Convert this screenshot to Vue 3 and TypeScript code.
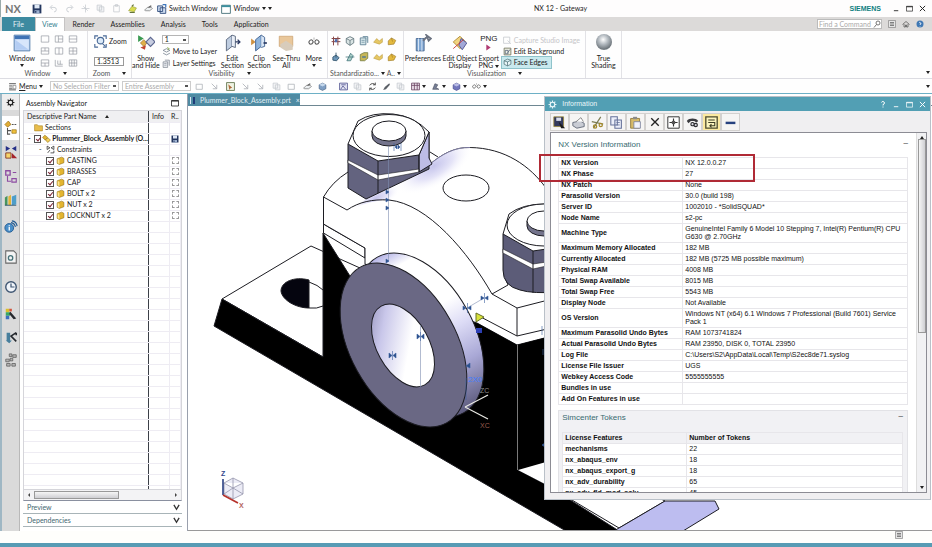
<script setup lang="ts">
import { h, ref, type FunctionalComponent } from 'vue'

type Shape = { d: string; s?: string; f?: string; w?: number }

const NAVY = '#2f4a7a'
const GREY = '#8a8f98'
const PALE = '#c4c8ce'
const GOLD = '#e0ad35'

// Every glyph is drawn on a 16 x 16 grid.
const glyphs: Record<string, Shape[]> = {
  save: [{ d: 'M1 1h14v14H1z', f: '#24365f' }, { d: 'M4 1h8v6H4z', f: '#dfe8f5' }, { d: 'M4 10h8v5H4z', f: '#9db1d0' }, { d: 'M6 11v3', s: '#24365f', w: 2 }],
  undo: [{ d: 'M3 6h6a4 4 0 0 1 0 8M6 2L2 6l4 4', s: PALE, w: 1.5 }],
  redo: [{ d: 'M13 6H7a4 4 0 0 0 0 8M10 2l4 4-4 4', s: PALE, w: 1.5 }],
  cutPale: [{ d: 'M8 1v14M1 8h14M4 4l8 8', s: PALE, w: 1.3 }],
  copyPale: [{ d: 'M2 2h8v9H2zM6 5h8v9H6z', s: PALE, w: 1.3, f: '#f3f4f6' }],
  pastePale: [{ d: 'M3 3h10v11H3zM6 1h4v3H6z', s: PALE, w: 1.3 }],
  brush: [{ d: 'M1 12l6-8 8 3-4 7z', f: '#d8dc4e', s: '#91983a' }, { d: 'M7 4l3-3M3 15h9', s: '#64743c', w: 2 }],
  touch: [{ d: 'M1 11l5-5h7l2 2-5 4H3z', s: '#555', f: '#eceff1' }, { d: 'M8 6l5-3', s: '#555', w: 2 }],
  switchWin: [{ d: 'M1 3h8v9H1zM5 6h9v9H5z', s: NAVY, f: '#cddcf0', w: 1.4 }, { d: 'M9 1h5v4', s: '#3f77bd', w: 2 }],
  window: [{ d: 'M1 2h14v13H1z', s: '#3f6c75', f: '#fff', w: 1.4 }, { d: 'M1 2h14v3H1z', f: '#3b8f9e' }],
  bigWindow: [{ d: 'M1 1h14v14H1z', s: '#557daa', f: '#b9d1f2', w: 0.8 }, { d: 'M1.5 1.5h13v3h-13z', f: '#3f73b5' }, { d: 'M2 5h12v9H2z', f: '#d8e6fb' }, { d: 'M2 5l12 9H2z', f: '#b4cdf3' }],
  gA: [{ d: 'M2 3h12v10H2z', s: GREY }],
  gB: [{ d: 'M2 3h12v10H2zM7 3v10M7 8h7', s: GREY }],
  gC: [{ d: 'M2 3h12v10H2zM2 8h12', s: GREY }],
  gD: [{ d: 'M2 3h12v10H2zM2 8h12M8 3v5', s: GREY }],
  gE: [{ d: 'M2 3h12v10H2zM8 3v10', s: GREY }],
  gF: [{ d: 'M2 3h12v10H2zM8 3v10M2 8h12', s: GREY }],
  gG: [{ d: 'M2 3h12v10H2zM2 8h12M8 8v5', s: GREY }],
  gH: [{ d: 'M2 3v10h12M6 4v6h8M10 4v6', s: GREY }],
  gI: [{ d: 'M2 3h12v10H2zM6 3v10M10 3v10M2 8h12', s: GREY }],
  zoomFit: [{ d: 'M1 5V1h4M11 1h4v4M1 11v4h4M15 11v4h-4', s: '#4a6a97', w: 1.4 }, { d: 'M12 7a4 4 0 1 1-8 0 4 4 0 0 1 8 0M10.500 10.500L14 14', s: '#4a6a97', f: '#dceaf8', w: 1.4 }],
  showHide: [{ d: 'M1 1l5 3-5 3z', f: '#3b9a52' }, { d: 'M3 8l3-3 3 3-3 3z', f: '#e0b04a', s: '#8a6323', w: 0.5 }, { d: 'M3 12l5-2-1 4z', f: '#c2452f' }, { d: 'M8 7l4-4 4 4-4 4z', f: '#c7cde0', s: '#5c6790', w: 1 }],
  moveLayer: [{ d: 'M2 6l6-3 6 3-6 3zM2 11l6 3 6-3', s: '#6b7787', w: 1.3 }, { d: 'M9 1l4 2-3 2', s: '#7da33c', w: 1.4 }],
  layers: [{ d: 'M2 5h8v10H2zM5 2h8v10', s: '#777f8b', f: '#e8ebef', w: 1.2 }, { d: 'M4 8h4M4 11h4', s: '#777f8b' }],
  section: [{ d: 'M3 5l5-4v10l-5 4z', f: '#bfcde0', s: '#56637a', w: 0.8 }, { d: 'M8 1l3 1v10l-3-1', f: '#e9eef6', s: '#56637a', w: 0.8 }, { d: 'M11 7h4M13 5l2 2-2 2', s: '#2d3c64', w: 1.2 }],
  clip: [{ d: 'M1 4l4 3-4 3z', f: '#ce9142' }, { d: 'M5 5l5-4v10l-5 4z', f: '#8fb4dc', s: '#3c5f8e', w: 0.8 }, { d: 'M10 1l3 2v8l-3 1', f: '#d8e5f5', s: '#3c5f8e', w: 0.8 }, { d: 'M12 8h3', s: '#2d3c64', w: 1.5 }],
  seeThru: [{ d: 'M2 2h12v9H2z', f: '#e9c79a', s: '#c69b68', w: 0.6 }, { d: 'M3 9l5-3 6 4v4l-6 1-5-3z', f: '#d8ccbb' }],
  more: [{ d: 'M1 8c2-4 5-4 6 0-2 4-5 4-6 0M9 8c1-4 4-4 6 0-2 4-5 4-6 0', s: '#555', w: 1.4 }, { d: 'M8 2v3', s: '#999', w: 1 }],
  stdA: [{ d: 'M1 4h14M1 9h14M4 1v14M11 1v14', s: '#884a4a', w: 1.6 }, { d: 'M6 5h4v5H6z', f: '#4f6dae' }],
  stdB: [{ d: 'M2 4l6-3 6 3v7l-6 4-6-4zM2 4l6 3 6-3M8 7v8', s: '#60747a', f: '#d9e4e4', w: 1.3 }],
  stdC: [{ d: 'M2 3h9v11H2zM6 1h8v10', s: '#5e7f92', f: '#d4e6ea', w: 1.4 }, { d: 'M4 7h5M4 10h5', s: '#5e7f92' }],
  stdD: [{ d: 'M1 10l5-6 4 4 5-4v6l-5 3z', f: '#e6c763', s: '#b29337', w: 0.8 }],
  stdE: [{ d: 'M2 8l5-5 7 4-3 6-9 1z', f: '#e3b93e', s: '#9b7826', w: 1 }, { d: 'M7 3l2 6', s: '#9b7826' }],
  stdF: [{ d: 'M8 1v8M3 8l5-3 5 4-4 5-6-1z', s: '#34566e', f: '#6e98bb', w: 1.4 }],
  stdG: [{ d: 'M3 14L9 2l4 4-4 8zM1 8h14', s: '#3e7077', f: '#aacfc9', w: 1.2 }],
  stdH: [{ d: 'M2 14V4l6-3h6v9l-5 4z', f: '#c6b658', s: '#6d753b', w: 1.2 }, { d: 'M5 8h6', s: '#3d6fa1', w: 2 }],
  prefs: [{ d: 'M2 4h7v11H2z', f: '#7fa7d3', s: '#476892', w: 0.8 }, { d: 'M4 4v11M7 4v11', s: '#dfeaf6', w: 0.8 }, { d: 'M8 6l4-4M11 1l4 3-2 2z', s: '#6b7280', w: 1.6 }],
  editObj: [{ d: 'M2 7l6-5 5 5-5 6z', f: '#f1d47f', s: '#b08b34', w: 0.8 }, { d: 'M9 4l5 4-4 6-3-4z', f: '#a2a8d8', s: '#4c5291', w: 0.8 }, { d: 'M2 13L11 5', s: '#c33', w: 0.8 }],
  play: [{ d: 'M3 1l10 7-10 7z', f: '#b03a72' }],
  camera: [{ d: 'M1 2h11v11H1zM8 8l6 6', s: '#c5c9cf', w: 1.4 }],
  editBg: [{ d: 'M2 2h12v12H2z', s: '#6c6f57', f: '#eef0e2', w: 1.4 }, { d: 'M4 6h5v6H4zM8 10l5-6', s: '#54627c', w: 1.4 }],
  face: [{ d: 'M2 5l6-3 6 2v7l-6 3-6-3zM2 5l6 2 6-3M8 7v7', s: '#41646b', f: '#e8f6f8', w: 1.2 }],
  menu: [{ d: 'M2 3h12M2 7h6M2 11h6M2 14h12', s: '#4b4b4b', w: 1.6 }, { d: 'M9 6h5v6H9z', s: '#777', w: 1.2 }],
  arrowPale: [{ d: 'M3 3l9 9M12 5v7H5', s: '#aeb2b8', w: 1.5 }],
  boxPale: [{ d: 'M2 4h11v9H2z', s: '#aeb2b8', w: 1.4 }],
  pick: [{ d: 'M1 1h14v14H1z', s: '#54683f', f: '#eff3e3', w: 1.4 }, { d: 'M4 4l7 6-3 1-2 3z', f: '#b0683b' }],
  cubeBlue: [{ d: 'M2 5l6-3 6 3v7l-6 3-6-3z', f: '#7f9fc4', s: '#3f597b', w: 1 }, { d: 'M2 5l6 3 6-3-6-3z', f: '#c5d8ec' }],
  cubeViolet: [{ d: 'M2 5l6-3 6 3v7l-6 3-6-3z', f: '#7277bd', s: '#3b3f83', w: 1 }, { d: 'M2 5l6 3 6-3-6-3z', f: '#b9bce6' }],
  fit: [{ d: 'M1 2h14v12H1z', s: '#4c4f8c', f: '#e5e6f4', w: 1.4 }, { d: 'M3 13l4-6 5 6M4 5h8', s: '#4c4f8c', w: 1.4 }],
  rotate: [{ d: 'M13 5a6 6 0 0 0-10 1M3 11a6 6 0 0 0 10-1M13 1v4H9M3 15v-4h4', s: '#444', w: 1.6 }],
  pen: [{ d: 'M2 14l3-5 8-7 1 3-7 8z', f: '#5a5f66' }],
  grid: [{ d: 'M1 2h14v12H1zM1 6h14M6 2v12M11 2v12', s: '#69425f', f: '#eadfe9', w: 1.4 }],
  shape: [{ d: 'M3 13L7 3l5 2-3 5 5 3z', f: '#777f96', s: '#3c4254', w: 1 }],
  gear: [{ d: 'M8 1v3M8 12v3M1 8h3M12 8h3M3 3l2 2M11 11l2 2M13 3l-2 2M5 11l-2 2', s: 'currentColor', w: 2 }, { d: 'M12 8a4 4 0 1 1-8 0 4 4 0 0 1 8 0z', s: 'currentColor', w: 2 }],
  navAsm: [{ d: 'M1 4l4-4 3 4-4 3z', f: GOLD, s: '#9c7320', w: 0.8 }, { d: 'M4 8v7h3M4 11h4M9 4h2M12 4h2', s: '#555', w: 1.2 }, { d: 'M9 10h5v4H9z', f: '#f2c23c', s: '#97721c', w: 0.8 }],
  navCon: [{ d: 'M2 1v6l5-3zM14 1v6L9 4z', f: '#252f86' }, { d: 'M2 9h6v6H2z', f: '#f5d46b', s: '#803323', w: 1 }, { d: 'M9 9l6 6H9z', f: '#a5222b' }],
  navPart: [{ d: 'M2 2h5v5H2z', s: '#8d4ca2', w: 1.5 }, { d: 'M4 8v6h4M10 4h4M9 11h5v4H9z', s: '#8d4ca2', w: 1.3 }],
  library: [{ d: 'M1 5l3-2v11H1z', f: '#48945d' }, { d: 'M5 4l3-2v12H5z', f: '#e3b436' }, { d: 'M9 4l5-2v11l-5 1z', f: '#4e9ec9' }, { d: 'M1 14h13', s: '#2f5470' }],
  web: [{ d: 'M11 9a5 5 0 1 1-10 0 5 5 0 0 1 10 0z', f: '#4a8fc9', s: '#215a91', w: 1 }, { d: 'M6 6v1M6 8v4', s: '#fff', w: 1.5 }, { d: 'M8 3a6 6 0 0 1 5 5M9 1a7 7 0 0 1 6 6', s: '#215a91', w: 1.2 }],
  doc: [{ d: 'M2 1h9l3 3v11H2z', s: '#666', f: '#f4f4f4', w: 1.2 }, { d: 'M10 9a2.500 2.500 0 1 1-5 0 2.500 2.500 0 0 1 5 0z', s: '#48747a', w: 1.5 }],
  clock: [{ d: 'M14 8A6 6 0 1 1 2 8a6 6 0 0 1 12 0z', s: '#3f5672', f: '#f1f5fa', w: 1.6 }, { d: 'M8 4v4h4', s: '#3f5672', w: 1.4 }],
  palette: [{ d: 'M2 2h4v4H2z', f: '#d9bf2d' }, { d: 'M2 6h5v4H2z', f: '#3ba864' }, { d: 'M2 10h4v4H2z', f: '#3b6fc0' }, { d: 'M7 5l7 8-3 1-5-6z', f: '#26292e' }, { d: 'M6 2h3v3H6z', f: '#d2553e' }],
  roles: [{ d: 'M3 3h4v9H3zM2 12l4 3 3-3z', f: '#477f9d' }, { d: 'M14 3L8 7l6 6M14 3v3', s: '#26292e', w: 1.8 }],
  nodes: [{ d: 'M6 1h3v3H6zM10 2h4v3h-4zM2 7h4v3H2zM7 6h3v3H7zM3 12h4v3H3zM9 12h4v3H9z', f: '#b5b5b5', s: '#555', w: 0.8 }],
  folder: [{ d: 'M1 3h5l2 2h7v9H1z', f: '#e8bd4c', s: '#a67c1e', w: 1 }],
  part: [{ d: 'M2 5l8-3 4 2v8l-8 3-4-2z', f: '#e3b52f', s: '#8c6a12', w: 1 }, { d: 'M3 5l3 2v7l-3-1z', f: '#fbe694' }],
  asm: [{ d: 'M1 6l4-4 5 4-4 5z', f: '#e3b52f', s: '#8c6a12', w: 1 }, { d: 'M6 10l5-3 4 4-5 4z', f: '#f2d05c', s: '#8c6a12', w: 1 }],
  con: [{ d: 'M2 2v6l5-3zM14 2v6L9 5zM3 14l4-5M8 14h6v-4', s: '#333', w: 1.4 }],
  search: [{ d: 'M14 6a4 4 0 1 1-8 0 4 4 0 0 1 8 0zM7 9l-5 6', s: '#666', w: 1.8 }],
  list: [{ d: 'M1 1h14v14H1z', s: '#777', f: '#e5e5e5', w: 1.2 }, { d: 'M4 5h8M4 8h8M4 11h8', s: '#555', w: 1.4 }],
  home: [{ d: 'M1 9l7-6 7 6M4 8v6h3v-4h2v4h3V8', s: '#555', w: 1.5 }],
  help: [{ d: 'M15 8A7 7 0 1 1 1 8a7 7 0 0 1 14 0z', f: '#3f78b4' }, { d: 'M6 6a2 2 0 1 1 2 3v1M8 12v1', s: '#fff', w: 1.6 }],
  min: [{ d: 'M2 13h10', s: 'currentColor', w: 2 }],
  max: [{ d: 'M1 3h14v11H1z', s: 'currentColor', w: 1.6 }, { d: 'M1 4h14', s: 'currentColor', w: 2 }],
  close: [{ d: 'M2 2l12 12M14 2L2 14', s: 'currentColor', w: 2.2 }],
  pin: [{ d: 'M5 5a3 3 0 1 1 3 4v2M8 13v2', s: 'currentColor', w: 2 }],
  dSave: [{ d: 'M1 1h12v12H1z', f: '#32395c', s: '#9c8a3a', w: 1 }, { d: 'M4 2h6v4H4z', f: '#d8ddeb' }, { d: 'M7 7l8 8h-5z', f: '#1c1c1c' }],
  dPrint: [{ d: 'M1 8l9-2 5 3v4l-9 2-5-3z', f: '#c9ccd4', s: '#555c6c', w: 1 }, { d: 'M5 7l6-5 3 5', f: '#fff', s: '#777', w: 1 }],
  dCut: [{ d: 'M3 15L12 1M1 7l14 3', s: '#7d7d54', w: 1.5 }, { d: 'M3 13a2 2 0 1 0 4 0 2 2 0 0 0-4 0zM10 11a2 2 0 1 0 4 0 2 2 0 0 0-4 0z', s: '#a3892b', w: 1.5 }],
  dCopy: [{ d: 'M1 1h8v10H1zM6 5h8v10H6z', s: '#66729a', f: '#eceffa', w: 1.3 }, { d: 'M8 8h4M8 11h4', s: '#66729a' }],
  dPaste: [{ d: 'M2 3h11v12H2z', f: '#d7bc69', s: '#8a7230', w: 1 }, { d: 'M5 1h5v3H5z', f: '#8a8a8a' }, { d: 'M6 7h8v8H6z', f: '#f1f3fa', s: '#777f9b', w: 1 }],
  dTarget: [{ d: 'M1 1h14v14H1z', s: '#333', f: '#fff', w: 1.2 }, { d: 'M8 3v10M3 8h10', s: '#333', w: 1.4 }, { d: 'M6 6h4v4H6z', f: '#555' }],
  dFind: [{ d: 'M1 6c3-4 11-4 14 0l-2 2-3-2H6L3 9z', f: '#3b3b3f' }, { d: 'M6 10a2 2 0 1 0 4 0 2 2 0 0 0-4 0zM10 11a2 2 0 1 0 4 0 2 2 0 0 0-4 0z', f: '#d9d9df', s: '#2c2c30', w: 1.4 }],
  dWrap: [{ d: 'M1 1h14v14H1z', s: '#4b4a2d', f: '#fbf4bd', w: 1.6 }, { d: 'M4 5h8M4 8h8v4H6M8 10l-2 2 2 2', s: '#3d3c25', w: 1.3 }],
  dDash: [{ d: 'M2 7h12v3H2z', f: '#27427f' }],
}

const Icon: FunctionalComponent<{ name: string; size?: number }> = (props) =>
  h(
    'svg',
    { viewBox: '0 0 16 16', width: props.size ?? 10, height: props.size ?? 10, 'aria-hidden': 'true' },
    (glyphs[props.name] ?? []).map((g) =>
      h('path', { d: g.d, fill: g.f ?? 'none', stroke: g.s ?? 'none', 'stroke-width': g.w ?? 1 }),
    ),
  )
Icon.props = ['name', 'size']

const quick = ['undo', 'redo', 'cutPale', 'copyPale', 'pastePale', 'brush', 'touch']
const tabs = ['Render', 'Assemblies', 'Analysis', 'Tools', 'Application']
const layouts = ['gA', 'gB', 'gC', 'gD', 'gE', 'gF', 'gG', 'gH', 'gI']
const standards = ['stdA', 'stdB', 'stdC', 'stdD', 'stdE', 'stdF', 'stdG', 'stdH', 'stdD', 'stdE']
const selection = ['boxPale', 'arrowPale', 'pick', 'arrowPale', 'arrowPale', 'copyPale', 'boxPale', 'touch', 'cubeBlue']
const viewTools = ['fit', 'copyPale', 'rotate', 'pen', 'copyPale', 'grid', 'shape', 'cubeViolet', 'more']
const rail = ['gear', 'navAsm', 'navCon', 'navPart', 'library', 'web', 'doc', 'clock', 'palette', 'roles', 'nodes']
const parts = ref(['CASTING', 'BRASSES', 'CAP', 'BOLT x 2', 'NUT x 2', 'LOCKNUT x 2'].map((name) => ({ name, on: true })))
const rootOn = ref(true)
const zoom = ref('1.3513')
const blankRows = 25

const dialogTools = [
  ['dSave', 'Save'], ['dPrint', 'Print'], ['dCut', 'Cut'], ['dCopy', 'Copy'], ['dPaste', 'Paste'],
  ['close', 'Delete'], ['dTarget', 'Locate'], ['dFind', 'Find'], ['dWrap', 'Word wrap'], ['dDash', 'Collapse'],
]

const info: [string, string][] = [
  ['NX Version', 'NX 12.0.0.27'],
  ['NX Phase', '27'],
  ['NX Patch', 'None'],
  ['Parasolid Version', '30.0 (build 198)'],
  ['Server ID', '1002010 - *SolidSQUAD*'],
  ['Node Name', 's2-pc'],
  ['Machine Type', 'GenuineIntel Family 6 Model 10 Stepping 7, Intel(R) Pentium(R) CPU G630 @ 2.70GHz'],
  ['Maximum Memory Allocated', '182 MB'],
  ['Currently Allocated', '182 MB (5725 MB possible maximum)'],
  ['Physical RAM', '4008 MB'],
  ['Total Swap Available', '8015 MB'],
  ['Total Swap Free', '5543 MB'],
  ['Display Node', 'Not Available'],
  ['OS Version', 'Windows NT (x64) 6.1 Windows 7 Professional (Build 7601) Service Pack 1'],
  ['Maximum Parasolid Undo Bytes', 'RAM 1073741824'],
  ['Actual Parasolid Undo Bytes', 'RAM 23950, DISK 0, TOTAL 23950'],
  ['Log File', 'C:\\Users\\S2\\AppData\\Local\\Temp\\S2ec8de71.syslog'],
  ['License File Issuer', 'UGS'],
  ['Webkey Access Code', '5555555555'],
  ['Bundles in use', ''],
  ['Add On Features in use', ''],
]

const tokens: [string, string][] = [
  ['mechanisms', '22'],
  ['nx_abaqus_env', '18'],
  ['nx_abaqus_export_g', '18'],
  ['nx_adv_durability', '65'],
  ['nx_adv_fld_mod_solv', '45'],
]
</script>

<template>
  <div class="app">
    <header class="titlebar">
      <span class="nx">NX</span>
      <div class="quick">
        <button class="bare" aria-label="Save"><Icon name="save" /></button>
        <button v-for="q in quick" :key="q" class="bare" :aria-label="q"><Icon :name="q" :size="9" /></button>
      </div>
      <button class="bare"><Icon name="switchWin" />Switch Window</button>
      <button class="bare"><Icon name="window" />Window <i class="tri"></i><i class="tri"></i></button>
      <span class="caption">NX 12 - Gateway</span>
      <span class="siemens">SIEMENS</span>
      <div class="winctl">
        <button class="bare" aria-label="Minimize"><Icon name="min" :size="7" /></button>
        <button class="bare" aria-label="Maximize"><Icon name="max" :size="7" /></button>
        <button class="bare" aria-label="Close"><Icon name="close" :size="7" /></button>
      </div>
    </header>

    <nav class="tabs">
      <a href="#" class="tab file">File</a>
      <a href="#" class="tab active">View</a>
      <a v-for="t in tabs" :key="t" href="#" class="tab">{{ t }}</a>
      <div class="find">
        <input type="text" placeholder="Find a Command" aria-label="Find a Command" />
        <Icon name="search" :size="8" />
      </div>
      <button class="bare end" aria-label="List"><Icon name="list" :size="8" /></button>
      <button class="bare end" aria-label="Home"><Icon name="home" :size="8" /></button>
      <button class="bare end" aria-label="Help"><Icon name="help" :size="8" /></button>
    </nav>

    <section class="ribbon">
      <div class="group g-window">
        <div class="tools">
          <button class="big wide"><Icon name="bigWindow" :size="18" />Window<i class="tri"></i></button>
          <div class="layouts">
            <button v-for="l in layouts" :key="l" class="bare" :aria-label="l"><Icon :name="l" :size="10" /></button>
          </div>
        </div>
        <footer>Window<i class="tri"></i></footer>
      </div>
      <div class="group g-zoom">
        <div class="tools stack">
          <button class="bare"><Icon name="zoomFit" :size="13" />Zoom</button>
          <input v-model="zoom" class="num" aria-label="Zoom scale" />
        </div>
        <footer>Zoom<i class="tri"></i></footer>
      </div>
      <div class="group g-vis">
        <div class="tools">
          <button class="big"><Icon name="showHide" :size="18" />Show<br />and Hide</button>
          <div class="stack layer">
            <select aria-label="Work layer"><option>1</option></select>
            <button class="bare"><Icon name="moveLayer" :size="9" />Move to Layer</button>
            <button class="bare"><Icon name="layers" :size="9" />Layer Settings</button>
          </div>
          <button class="big"><Icon name="section" :size="18" />Edit<br />Section</button>
          <button class="big"><Icon name="clip" :size="18" />Clip<br />Section</button>
          <button class="big"><Icon name="seeThru" :size="18" />See-Thru<br />All</button>
          <button class="big more"><Icon name="more" :size="12" />More<i class="tri"></i></button>
        </div>
        <footer>Visibility<i class="tri"></i></footer>
      </div>
      <div class="group g-std">
        <div class="tools">
          <div class="standards">
            <button v-for="(s, i) in standards" :key="i" class="bare" :aria-label="'Standard part ' + (i + 1)"><Icon :name="s" :size="10" /></button>
          </div>
        </div>
        <footer><span>Standardizatio...</span><i class="tri"></i><span>A..</span><i class="tri"></i></footer>
      </div>
      <div class="group g-viz">
        <div class="tools">
          <button class="big"><Icon name="prefs" :size="18" />Preferences</button>
          <button class="big"><Icon name="editObj" :size="18" />Edit Object<br />Display</button>
          <button class="big png"><b>PNG</b><Icon name="play" :size="7" />Export<br />PNG <i class="tri"></i></button>
          <div class="stack viz">
            <button class="bare" disabled><Icon name="camera" :size="9" />Capture Studio Image</button>
            <button class="bare"><Icon name="editBg" :size="9" />Edit Background</button>
            <button class="bare on"><Icon name="face" :size="9" />Face Edges</button>
          </div>
        </div>
        <footer>Visualization<i class="tri"></i></footer>
      </div>
      <div class="group g-shade">
        <div class="tools">
          <button class="big"><span class="ball"></span>True<br />Shading</button>
        </div>
      </div>
      <i class="tri corner"></i>
    </section>

    <div class="toolbar">
      <button class="bare"><Icon name="menu" :size="9" /><span><u>M</u>enu</span><i class="tri"></i></button>
      <select aria-label="Selection filter"><option>No Selection Filter</option></select>
      <select aria-label="Selection scope"><option>Entire Assembly</option></select>
      <div class="strip">
        <button v-for="(s, i) in selection" :key="i" class="bare" :aria-label="'Selection tool ' + (i + 1)"><Icon :name="s" :size="9" /></button>
      </div>
      <div class="strip view">
        <button v-for="(s, i) in viewTools" :key="i" class="bare" :aria-label="'View tool ' + (i + 1)"><Icon :name="s" :size="9" /><i v-if="i > 4" class="tri"></i></button>
      </div>
      <i class="tri corner"></i>
    </div>

    <main class="work">
      <aside class="rail">
        <button v-for="(r, i) in rail" :key="r" class="bare" :class="{ current: i === 1, first: i === 0 }" :aria-label="r"><Icon :name="r" :size="i ? 14 : 9" /></button>
      </aside>

      <section class="navigator">
        <div class="nav-title">Assembly Navigator<button class="bare" aria-label="Maximize panel"><Icon name="max" :size="8" /></button></div>
        <div class="tree">
          <table>
            <thead>
              <tr><th>Descriptive Part Name<i class="up"></i></th><th>Info</th><th>R..</th></tr>
            </thead>
            <tbody>
              <tr><td><div class="cell l1"><Icon name="folder" :size="9" />Sections</div></td><td></td><td></td></tr>
              <tr>
                <td>
                  <label class="cell l0 root"><span>-</span><input v-model="rootOn" type="checkbox" /><Icon name="asm" :size="9" />Plummer_Block_Assembly (O...</label>
                </td>
                <td></td>
                <td><Icon name="save" :size="8" /></td>
              </tr>
              <tr><td><div class="cell l2"><span>-</span><Icon name="con" :size="9" />Constraints</div></td><td></td><td></td></tr>
              <tr v-for="p in parts" :key="p.name">
                <td><label class="cell l3"><input v-model="p.on" type="checkbox" /><Icon name="part" :size="9" />{{ p.name }}</label></td>
                <td></td>
                <td><span class="ghost"></span></td>
              </tr>
              <tr v-for="n in blankRows" :key="n"><td></td><td></td><td></td></tr>
            </tbody>
          </table>
        </div>
        <div class="hscroll"><i class="lt"></i><span class="thumb"></span><i class="rt"></i></div>
        <button class="fold">Preview<svg viewBox="0 0 8 8" width="7" height="7"><path d="M1 1l3 5 3-5" /></svg></button>
        <button class="fold">Dependencies<svg viewBox="0 0 8 8" width="7" height="7"><path d="M1 1l3 5 3-5" /></svg></button>
      </section>

      <section class="graphics">
        <div class="doc-tabs"><a href="#" class="doc-tab"><span class="dt"></span>Plummer_Block_Assembly.prt<em>×</em></a></div>
        <svg class="model" viewBox="188 106 744 424" preserveAspectRatio="xMinYMin slice" role="img" aria-label="Plummer block assembly">
          <defs>
            <linearGradient id="bore" x1="0" y1="0" x2="0.700" y2="1">
              <stop offset="0" stop-color="#8583ad" />
              <stop offset="0.300" stop-color="#c9c7ea" />
              <stop offset="0.650" stop-color="#ffffff" />
            </linearGradient>
            <linearGradient id="rim" x1="0.500" y1="0" x2="0.500" y2="1">
              <stop offset="0" stop-color="#b4b3e6" />
              <stop offset="0.100" stop-color="#ffffff" />
              <stop offset="0.400" stop-color="#ffffff" />
              <stop offset="0.550" stop-color="#dddcf6" />
              <stop offset="0.750" stop-color="#a9a8d6" />
              <stop offset="1" stop-color="#5c5a7c" />
            </linearGradient>
            <radialGradient id="domeShade">
              <stop offset="0" stop-color="#c6c5ec" />
              <stop offset="0.500" stop-color="#e6e5f8" />
              <stop offset="1" stop-color="#ffffff" stop-opacity="0" />
            </radialGradient>
            <clipPath id="capClip">
              <path d="M340 218Q362 200 389 200C400 201 410 204 420 210L500 210V147H470C455 147 442 154 429 165L370 196Z" />
            </clipPath>
          </defs>

          <g stroke="#1c1c22" stroke-width="1" stroke-linejoin="round">
            <path d="M222 299L311 246L360 268V378L323 357Z" fill="#fff" />
            <path d="M222 299L214 326L566 531H619L545 484V300H365L323 233V357Z" fill="#000" />
            <path d="M309 280C294 276 281 282 281 291C282 300 296 308 309 308Z" fill="#05050f" />
            <path d="M309 282Q318 285 323 290M309 308Q317 309 323 306" fill="none" />
            <path d="M518 470L573 455L665 501L619 528L545 484Z" fill="#fff" />
            <path d="M619 528L665 501H715L719 509L683 531H614Z" fill="#bdbdf0" />
            <path d="M323.500 224V233L365 258V248L330 228Z" fill="#fff" />
            <path d="M348 172Q332 182 323.500 197V224L365 248V264L440 310L477 323L517 345L560 334V200L546 188C530 166 505 148 470 147.500C455 147 442 154 429 165Z" fill="#fff" />
            <g clip-path="url(#capClip)" stroke="none">
              <ellipse cx="434" cy="166" rx="44" ry="20" transform="rotate(-32 434 166)" fill="url(#domeShade)" />
              <ellipse cx="376" cy="198" rx="26" ry="10" transform="rotate(-24 376 198)" fill="url(#domeShade)" />
            </g>
            <path d="M323.500 197L347 210C359 202 372 199 389 200C428 204 468 252 492 294" fill="none" />
            <path d="M429 165C442 154 455 147 470 147.500" fill="none" stroke="#7b7aa0" />
            <path d="M492 294L517 308L560 297M492 294L508 285Q503 275 504 250M517 308V336M477 315L517 336L560 326M430 152L438 157" fill="none" />
            <ellipse cx="466" cy="188" rx="23" ry="13" fill="#fff" />
          </g>

          <path d="M477 323L517 345L560 334V480L518 470L470 470V400Z" fill="#000" />
          <path d="M518 470L560 458V492L545 484Z" fill="#fff" />
          <path d="M517.500 345V470" stroke="#7a7a7a" stroke-width="1" />

          <g stroke="#1c1c22" stroke-width="1">
            <path d="M348 144V188L366 199L429 169V132Z" fill="#63637f" />
            <path d="M419 155L429 132V158L432 164L419 172Z" fill="#bdbce6" />
            <path d="M348 144L358 121Q372 112 393 114Q414 116 429 132L419 155L378 161Z" fill="#fff" />
            <path d="M348 160L378 175L419 169V172L378 180L348 163Z" fill="#fff" stroke-width="0.600" />
            <path d="M378 161V193M419 155V172" fill="none" />
            <ellipse cx="389" cy="135.500" rx="36" ry="21" fill="#fff" />
            <path d="M372 131V136A17 10 0 0 0 406 136V131Z" fill="#74748c" />
            <ellipse cx="389" cy="131" rx="17" ry="10" fill="#fff" />
          </g>

          <g stroke="#1c1c22" stroke-width="1">
            <path d="M503 234V270Q503 286 520 290Q533 294 560 292V234Z" fill="#5c5c78" />
            <path d="M503 234L509 214Q522 204 545 204H560V247L533 251Z" fill="#fff" />
            <path d="M503 249L533 264L560 260V263L533 269L503 253Z" fill="#fff" stroke-width="0.600" />
            <path d="M533 251V293" fill="none" />
            <ellipse cx="544" cy="225" rx="37" ry="21" fill="#fff" />
            <path d="M527 221V226A17 10 0 0 0 561 226V221Z" fill="#74748c" />
            <ellipse cx="544" cy="221" rx="17" ry="10" fill="#fff" />
          </g>

          <g stroke="#1c1c22" stroke-width="1">
            <ellipse cx="420.500" cy="335" rx="53" ry="89" transform="rotate(-29 420.500 335)" fill="url(#rim)" />
            <ellipse cx="403.500" cy="345" rx="53" ry="89" transform="rotate(-29 403.500 345)" fill="#6a6884" />
            <ellipse cx="403" cy="345.500" rx="26" ry="45" transform="rotate(-29 403 345.500)" fill="url(#bore)" />
          </g>

          <g stroke="#3a5fa0" stroke-width="0.600" fill="#2a4f8a">
            <path d="M388.500 146V262M420.500 325V387M467 308L484 298" fill="none" stroke="#7e8db0" />
            <path d="M394 143v8M401 143v8M395 147l2-2v4zM400 147l-2-2v4z" />
            <path d="M386 190l3 2-3 2zM386 198l3 2-3 2zM386 206l3 2-3 2zM386 259l3 2-3 2z" />
            <path d="M392.500 351v9M389 353v5l3-2.500zM396 353v5l-3-2.500zM420.500 332v9M417 334v5l3-2.500zM424 334v5l-3-2.500z" />
            <path d="M484.500 293v10M481 296v4l3-2zM488 296v4l-3-2zM467.500 303v10M463 306v4l3-2zM471 306v4l-3-2z" />
            <path d="M466 366l4-3v5zM466 378V400M542 326v9M543 349v6M542 445l3-2v4z" />
          </g>
          <path d="M476 328h6v5h-6z" fill="#2d3fb4" />
          <path d="M476 313L484 317L476 322Z" fill="#d9e23a" stroke="#66702a" stroke-width="1" />
          <path d="M465 407L488 395M465 407L488 419" stroke="#e9e9e4" stroke-width="1.200" />
          <text x="468" y="382" class="dim">2X0</text>
          <text x="480" y="393" class="wcs grey">ZC</text>
          <text x="480" y="428" class="wcs">XC</text>

          <g fill="none" stroke="#9695ac" stroke-width="0.800">
            <path d="M233 478l10 5v11l-10 5-9-5v-11zM224 483l9 5 10-5M233 488v11M233 478v10M224 494l9-6 10 6" fill="#ececf6" />
            <path d="M223 495V479" stroke="#2a3f83" stroke-width="1.600" />
            <path d="M223 495L238 503" stroke="#b6322b" stroke-width="1.600" />
          </g>
          <text x="221" y="476" class="axis">Z</text>
          <text x="239" y="508" class="axis red">X</text>
        </svg>
      </section>

      <section class="dialog" role="dialog" aria-label="Information">
        <header>
          <Icon name="gear" :size="9" />Information
          <div class="winctl">
            <button class="bare" aria-label="Help"><Icon name="pin" :size="8" /></button>
            <button class="bare" aria-label="Minimize"><Icon name="min" :size="7" /></button>
            <button class="bare" aria-label="Maximize"><Icon name="max" :size="7" /></button>
            <button class="bare" aria-label="Close"><Icon name="close" :size="7" /></button>
          </div>
        </header>
        <div class="dtools">
          <button v-for="[icon, label] in dialogTools" :key="icon" :class="{ on: icon === 'dWrap' }" :aria-label="label"><Icon :name="icon" :size="icon === 'close' ? 10 : 13" /></button>
        </div>
        <div class="frame">
          <div class="pane">
            <h2>NX Version Information<button class="bare" aria-label="Collapse NX Version Information">–</button></h2>
            <table class="props">
              <tr v-for="[k, v] in info" :key="k"><th scope="row">{{ k }}</th><td>{{ v }}</td></tr>
            </table>
            <div class="tokens">
              <h2>Simcenter Tokens<button class="bare" aria-label="Collapse Simcenter Tokens">–</button></h2>
              <table class="props">
                <tr class="head"><th scope="col">License Features</th><th scope="col">Number of Tokens</th></tr>
                <tr v-for="[k, v] in tokens" :key="k"><th scope="row">{{ k }}</th><td>{{ v }}</td></tr>
              </table>
            </div>
          </div>
          <div class="vscroll"><i class="up"></i><span class="thumb"></span><i class="tri"></i></div>
        </div>
        <div class="highlight"></div>
      </section>
    </main>

    <footer class="status"><Icon name="list" :size="8" /></footer>
  </div>
</template>

<style>
body {
  background: #fff;
}
</style>

<style scoped>
.app {
  display: flex;
  flex-direction: column;
  height: 100vh;
  overflow: hidden;
  background: #fff;
  color: #222;
  font: 7px/9px Lato, 'Open Sans', sans-serif;
}
.app *,
.app *::before {
  box-sizing: border-box;
}
button,
input,
select {
  margin: 0;
  padding: 0;
  border: 0;
  border-radius: 0;
  background: none;
  color: inherit;
  font: inherit;
}
svg {
  flex: none;
  display: block;
}
a {
  color: inherit;
  text-decoration: none;
}
.bare {
  display: flex;
  align-items: center;
  gap: 2px;
  white-space: nowrap;
}
.tri,
.up {
  display: inline-block;
  flex: none;
  width: 0;
  height: 0;
  border: 2px solid transparent;
  border-top: 3px solid #222;
  border-bottom: 0;
}
.up {
  border-top: 0;
  border-bottom: 3px solid #222;
}

.titlebar {
  display: flex;
  align-items: center;
  gap: 4px;
  height: 17px;
  padding: 0 6px 0 4px;
  border-left: 1px solid #9aa;
  background: #fefdfd;
}
.nx {
  width: 23px;
  color: #777;
  font: 700 11px/12px Lato, sans-serif;
}
.quick {
  display: flex;
  justify-content: space-between;
  width: 121px;
}
.caption {
  flex: 1;
  text-align: center;
}
.siemens {
  margin-right: 8px;
  color: #0f8080;
  font: 700 7px/9px 'Liberation Sans', sans-serif;
}
.winctl {
  display: flex;
  gap: 6px;
}

.tabs {
  display: flex;
  align-items: stretch;
  height: 14px;
  padding: 0 5px 0 2px;
  background: #dcdad9;
}
.tab {
  padding: 3px 8px 0;
}
.tab.file {
  width: 33px;
  background: #3d8aa0;
  color: #e6f4f7;
  text-align: center;
}
.tab.active {
  border: 1px solid #c6c4c4;
  border-bottom: 0;
  padding: 2px 6px 0;
  background: #fff;
  color: #33818f;
}
.find {
  display: flex;
  align-items: center;
  width: 65px;
  margin: 2px 3px 2px auto;
  border: 1px solid #bbb;
  background: #fff;
}
.find input {
  flex: 1;
  min-width: 0;
  padding-left: 1px;
  outline: 0;
}
.find input::placeholder {
  color: #aaa;
}
.end {
  padding: 0 3px;
}

.ribbon,
.toolbar {
  position: relative;
  display: flex;
  border-bottom: 1px solid #dcdce2;
  background: #fefefe;
}
.ribbon {
  height: 48px;
  padding-left: 4px;
}
.corner {
  position: absolute;
  right: 2px;
  bottom: 4px;
}
.group {
  display: flex;
  flex-direction: column;
  border-right: 1px solid #e2e2e6;
}
.g-window { width: 84px; }
.g-zoom { width: 44px; }
.g-vis { width: 196px; }
.g-std { width: 76px; }
.g-viz { width: 182px; }
.g-shade { width: 36px; }
.tools {
  display: flex;
  flex: 1;
  min-height: 0;
  padding-top: 3px;
}
.group > footer {
  display: flex;
  align-items: center;
  justify-content: center;
  height: 9px;
  color: #555;
}
.group > footer .tri {
  margin-left: 12px;
}
.g-std > footer {
  gap: 2px;
}
.g-std > footer .tri {
  margin-left: 0;
}
.big {
  flex: 1 1 auto;
  align-self: flex-start;
  line-height: 7px;
  text-align: center;
  white-space: nowrap;
}
.g-vis .big {
  flex: 1 1 0;
}
.big svg {
  margin: 0 auto 3px;
}
.big .tri {
  display: block;
  margin: 2px auto 0;
}
.big.png .tri {
  display: inline-block;
}
.png b {
  display: block;
  font: 400 8px/9px 'Liberation Sans', sans-serif;
}
.big.png svg {
  margin-top: 1px;
  margin-bottom: 4px;
}
.big.more svg {
  margin-top: 2px;
  margin-bottom: 7px;
}
.big.wide {
  flex: none;
  width: 36px;
}
.layouts {
  display: grid;
  grid-template-columns: repeat(3, 14px);
  align-content: start;
  row-gap: 2px;
}
.stack {
  display: flex;
  flex-direction: column;
  justify-content: space-between;
  align-items: flex-start;
}
.g-zoom .stack {
  padding: 4px 6px 3px;
}
.num {
  width: 30px;
  height: 9px;
  padding-left: 2px;
  border: 1px solid #999;
  background: #fff;
}
.layer,
.viz {
  padding: 1px 2px 1px;
}
select {
  appearance: none;
  height: 9px;
  padding: 0 6px 0 2px;
  border: 1px solid #b5b5b5;
  background: #fff linear-gradient(#555, #555) no-repeat right 2px center / 3px 2px;
  line-height: 7px;
}
.layer select {
  width: 27px;
}
.viz .bare {
  padding: 1px 3px 1px 1px;
}
.viz .bare:disabled {
  color: #c5c5c8;
}
.viz .on {
  outline: 1px solid #8fc3cb;
  background: #c9e9ee;
}
.standards {
  display: grid;
  grid-template-columns: repeat(5, 14px);
  align-content: start;
  row-gap: 6px;
  padding: 2px 3px;
}
.ball {
  display: block;
  width: 16px;
  height: 16px;
  margin: 0 auto 5px;
  border-radius: 50%;
  background: radial-gradient(circle at 45% 35%, #fff, #b3bac0 35%, #6f777d 70%, #c4d0d6);
}

.toolbar {
  align-items: center;
  height: 15px;
  padding-left: 8px;
  border-bottom-color: #6db0c6;
}
.toolbar select {
  width: 69px;
  height: 10px;
  margin-left: 3px;
  border-color: #ccc;
  color: #aaa;
}
.toolbar > select:first-of-type {
  margin-left: 7px;
}
.strip {
  display: flex;
  justify-content: space-between;
  width: 132px;
  margin-left: 4px;
}
.strip.view {
  width: 148px;
  margin-left: 12px;
}
.toolbar .corner {
  bottom: 5px;
}

.work {
  position: relative;
  display: flex;
  flex: 1;
  min-height: 0;
}
.rail {
  display: flex;
  flex-direction: column;
  width: 20px;
  border-left: 2px solid #9fb7c4;
  border-right: 1px solid #b9b9b9;
  background: #dadada;
}
.rail .bare {
  justify-content: center;
  height: 30px;
}
.rail .bare.first {
  height: 16px;
  margin-bottom: 6px;
  background: #eee;
}
.rail .current {
  background: #fff;
}
.rail .bare:nth-child(n + 2):nth-child(-n + 5) {
  height: 24px;
}
.rail .bare:nth-child(n + 9) {
  height: 23px;
}
.navigator {
  display: flex;
  flex-direction: column;
  width: 168px;
  padding: 2px 5px 4px 3px;
  border-right: 1px solid #9aa0ad;
}
.nav-title {
  display: flex;
  align-items: center;
  justify-content: space-between;
  height: 14px;
  padding: 0 3px;
}
.tree {
  flex: 1;
  min-height: 0;
  overflow: hidden;
  border: 1px solid #d5d5da;
  border-bottom: 0;
}
.tree table {
  width: 100%;
  border-collapse: collapse;
  table-layout: fixed;
}
.tree th,
.tree td {
  height: 11px;
  padding: 0;
  border-bottom: 1px solid #eeecf3;
  border-right: 1px solid #eeecf3;
  font-weight: 400;
}
.tree th {
  padding-left: 3px;
  background: #f0f0f2;
  text-align: left;
}
.tree th .up {
  margin-left: 9px;
  vertical-align: middle;
}
.tree th:first-child,
.tree td:first-child {
  border-right: 1px solid #3c4048;
}
.tree th:nth-child(2) { width: 21px; }
.tree th:nth-child(3) { width: 11px; padding-left: 1px; }
.tree td > svg,
.ghost {
  display: block;
  margin: auto;
}
.ghost {
  width: 7px;
  height: 7px;
  border: 1px dashed #999;
}
.cell {
  display: flex;
  align-items: center;
  gap: 2px;
  height: 10px;
  white-space: nowrap;
}
.l0 { padding-left: 4px; }
.l1 { padding-left: 10px; }
.l2 { padding-left: 15px; }
.l3 { padding-left: 22px; }
.root {
  gap: 1px;
  font-weight: 700;
}
.cell span {
  width: 5px;
}
.cell input {
  position: relative;
  appearance: none;
  width: 8px;
  height: 8px;
  border: 1px solid #555;
  background: #fff;
}
.cell input:checked::before {
  content: '';
  position: absolute;
  left: 2px;
  top: 0;
  width: 3px;
  height: 5px;
  border: solid #7b2436;
  border-width: 0 1px 1px 0;
  transform: rotate(40deg);
}
.hscroll {
  display: flex;
  align-items: center;
  height: 12px;
  padding: 1px 4px;
  border: 1px solid #d5d5da;
  border-bottom-color: #8a90a0;
  background: #f3f3f5;
}
.thumb {
  border: 1px solid #999;
  background: linear-gradient(#f6f6f6, #cfcfd3);
}
.hscroll .thumb {
  width: 85px;
  height: 8px;
  margin-left: 4px;
}
.lt,
.rt {
  border: 2px solid transparent;
  border-right-color: #444;
  border-left: 0;
}
.rt {
  margin-left: auto;
  border-left: 2px solid #444;
  border-right: 0;
}
.fold {
  display: flex;
  align-items: center;
  justify-content: space-between;
  height: 13px;
  padding: 0 2px 0 4px;
  border-bottom: 1px solid #a8b4b8;
  color: #3f6670;
}
.fold path {
  fill: none;
  stroke: #333;
  stroke-width: 1.5;
}

.graphics {
  display: flex;
  flex-direction: column;
  flex: 1;
  min-width: 0;
  border-bottom: 1px solid #999;
}
.doc-tabs {
  height: 12px;
  border-bottom: 1px solid #6e8792;
}
.doc-tab {
  display: flex;
  align-items: center;
  gap: 5px;
  width: 112px;
  height: 12px;
  padding-left: 2px;
  background: #4f8ba3;
  color: #e2f0f5;
}
.doc-tab em {
  font-style: normal;
}
.dt {
  width: 5px;
  height: 7px;
  border-right: 2px solid #1e3c78;
  border-left: 1px solid #dbe7f5;
}
.model {
  flex: 1;
  width: 100%;
  min-height: 0;
}
.dim {
  fill: #3f7dff;
  font: 8px 'Liberation Sans', sans-serif;
}
.wcs {
  fill: #9b5b4c;
  font: 7px 'Liberation Sans', sans-serif;
}
.grey {
  fill: #8c8c8c;
}
.axis {
  fill: #33488e;
  font: 700 7px 'Liberation Sans', sans-serif;
}
.red {
  fill: #b4645e;
}

.dialog {
  position: absolute;
  top: 2px;
  right: 1px;
  bottom: 31px;
  display: flex;
  flex-direction: column;
  width: 41.5%;
  min-width: 386px;
  border: 1px solid #b9c0c8;
  background: #f0eff1;
  font: 7px/8px 'Liberation Sans', sans-serif;
}
.dialog > header {
  display: flex;
  align-items: center;
  gap: 5px;
  height: 14px;
  padding: 0 4px 0 3px;
  background: #529fb4;
  color: #e8f6f9;
}
.dialog > header .winctl {
  margin-left: auto;
  color: #fff;
}
.dtools {
  display: flex;
  padding: 2px 5px 1px;
}
.dtools button {
  display: flex;
  align-items: center;
  justify-content: center;
  width: 19px;
  height: 18px;
  border: 1px solid #d3d1cf;
  background: #f6f5f4;
}
.dtools button.on {
  background: #fbe9a0;
}
.frame {
  display: flex;
  flex: 1;
  min-height: 0;
  margin: 0 3px 6px 5px;
  border: 1px solid #8c8c94;
  background: #fff;
}
.pane {
  flex: 1;
  min-width: 0;
  padding: 3px 8px 0 7px;
  overflow: hidden;
}
h2 {
  display: flex;
  justify-content: space-between;
  height: 21px;
  margin: 0;
  padding-top: 4px;
  color: #376a70;
  font: 8px/9px 'Liberation Sans', sans-serif;
}
h2 .bare {
  height: 5px;
  color: #111;
}
.props {
  width: 100%;
  border-collapse: collapse;
  table-layout: fixed;
}
.props th,
.props td {
  padding: 1px 0 1px 2px;
  border: 1px solid #e7e6ea;
  color: #111;
  text-align: left;
  vertical-align: middle;
}
.props th:first-child {
  width: 124px;
}
.tokens {
  margin-top: 5px;
  padding: 0 4px 0 3px;
  border: 1px solid #e2e2e6;
  background: #f1f1f4;
}
.tokens h2 {
  padding-top: 2px;
}
.tokens .props {
  background: #fff;
}
.tokens .head {
  background: #f1f1f4;
}
.vscroll {
  display: flex;
  flex-direction: column;
  align-items: center;
  justify-content: space-between;
  width: 10px;
  padding: 3px 0;
  border-left: 1px solid #ddd;
  background: #f1f1f3;
}
.vscroll .thumb {
  width: 8px;
  height: 194px;
  margin-bottom: auto;
  background: linear-gradient(90deg, #f6f6f6, #cfcfd3);
}
.highlight {
  position: absolute;
  top: 57px;
  left: -6px;
  width: 216px;
  height: 28px;
  border: 2px solid #b02a35;
}

.status {
  display: flex;
  justify-content: flex-end;
  align-items: center;
  height: 16px;
  padding: 0 29px 4px 0;
  border-bottom: 4px solid #579bb4;
  background: #fefefc;
}
</style>
